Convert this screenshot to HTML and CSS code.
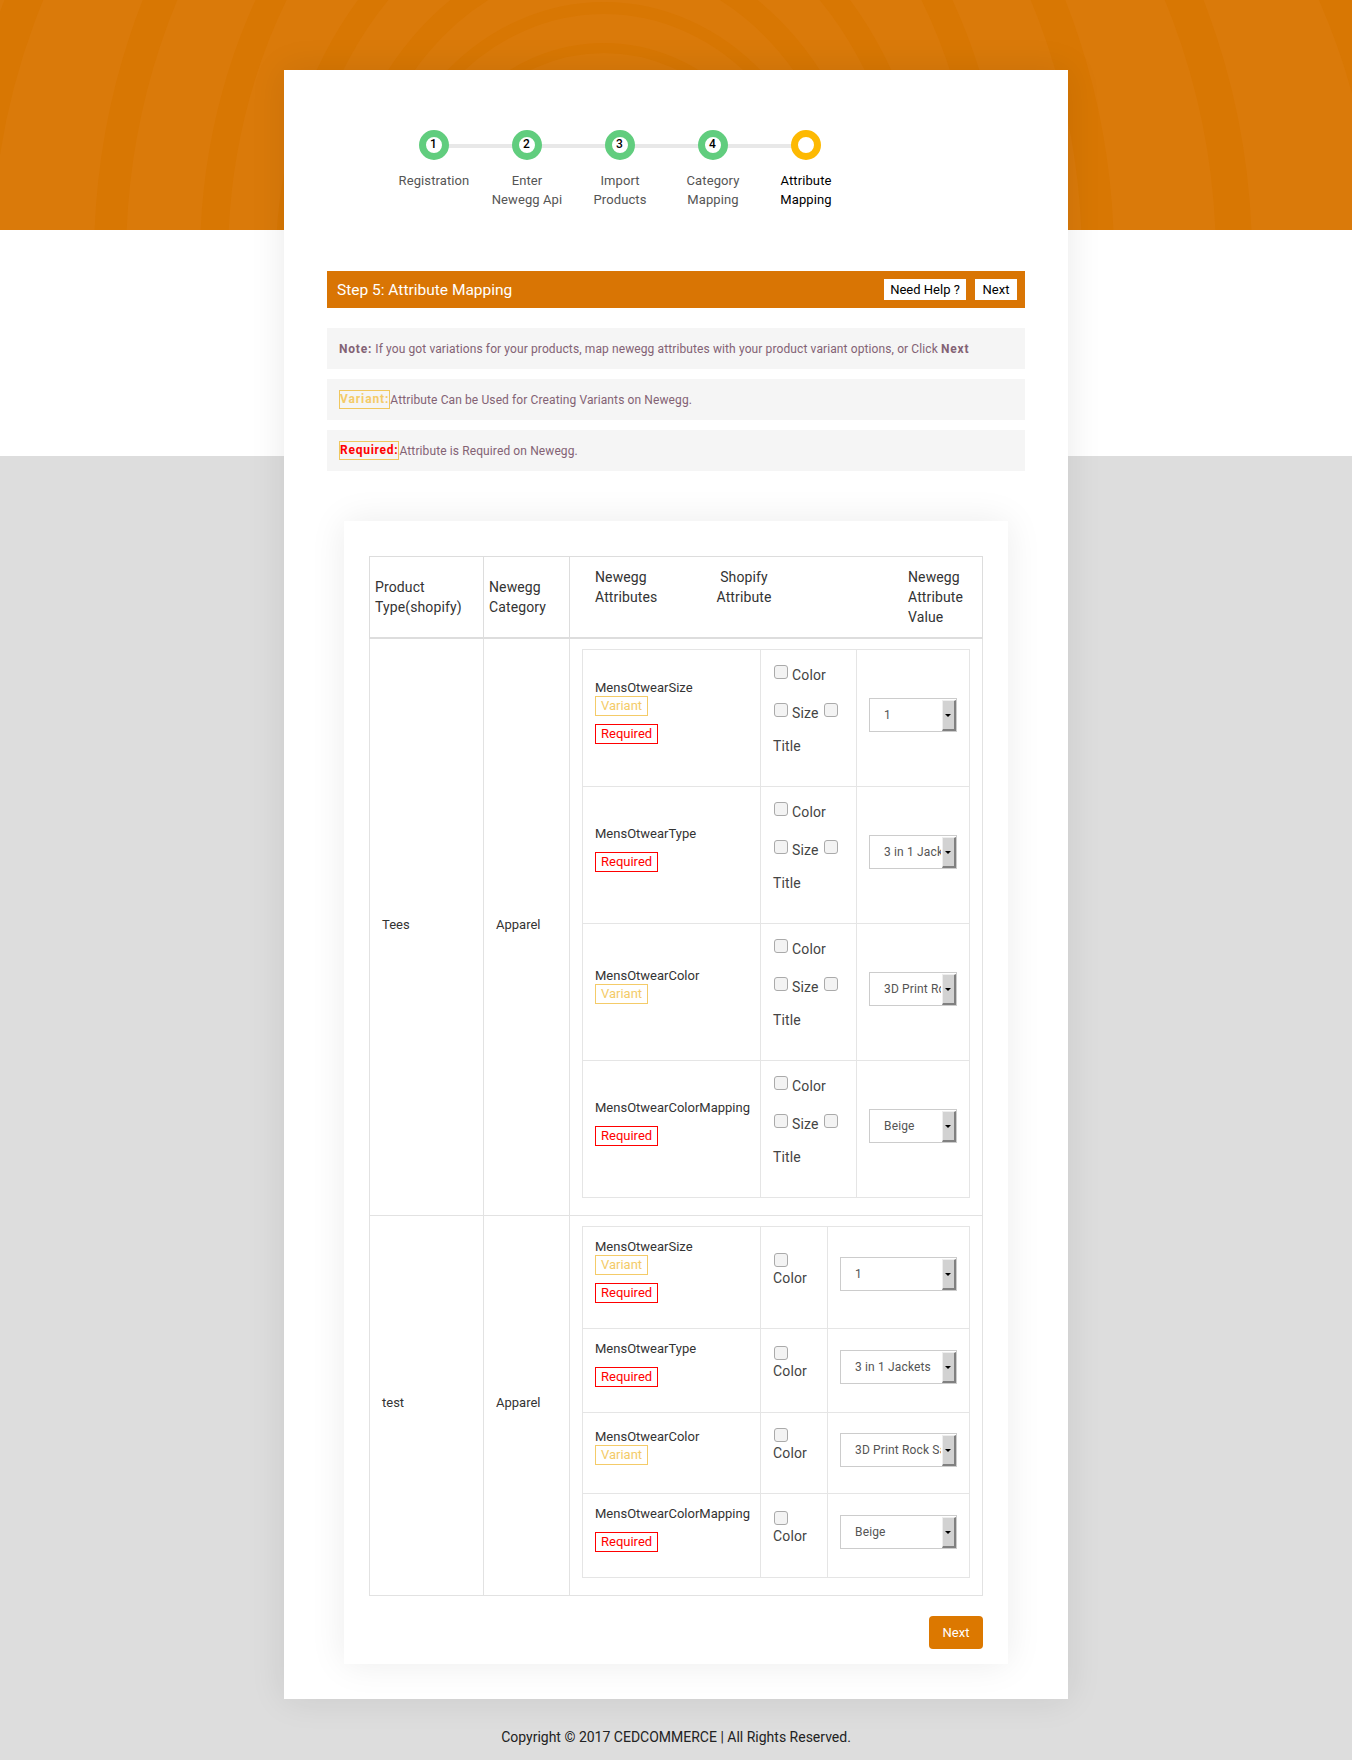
FILE: index.html
```html
<!DOCTYPE html>
<html lang="en">
<head>
<meta charset="utf-8">
<title>Step 5: Attribute Mapping</title>
<link rel="stylesheet" href="styles.css">
</head>
<body>
<div class="page">
  <svg class="rings" viewBox="0 0 1352 230" aria-hidden="true">
    <g fill="none" stroke="#d87703">
      <ellipse cx="604" cy="260" rx="190" ry="212" stroke-width="10"/>
      <ellipse cx="604" cy="260" rx="225" ry="252" stroke-width="12"/>
      <ellipse cx="604" cy="260" rx="259" ry="305" stroke-width="22"/>
      <ellipse cx="604" cy="260" rx="316" ry="381" stroke-width="24"/>
      <ellipse cx="604" cy="260" rx="390" ry="499" stroke-width="28"/>
      <ellipse cx="604" cy="260" rx="494" ry="593" stroke-width="32"/>
      <ellipse cx="604" cy="260" rx="630" ry="667" stroke-width="36"/>
      <ellipse cx="604" cy="260" rx="790" ry="720" stroke-width="40"/>
    </g>
  </svg>
  <main class="card">
    <ol class="steps">
      <li class="step done"><span class="dot">1</span><span class="step-label">Registration</span></li>
      <li class="step done"><span class="dot">2</span><span class="step-label">Enter<br>Newegg Api</span></li>
      <li class="step done"><span class="dot">3</span><span class="step-label">Import<br>Products</span></li>
      <li class="step done"><span class="dot">4</span><span class="step-label">Category<br>Mapping</span></li>
      <li class="step active"><span class="dot"></span><span class="step-label">Attribute<br>Mapping</span></li>
    </ol>

    <header class="bar">
      <h1 class="bar-title">Step 5: Attribute Mapping</h1>
      <a class="bar-btn bar-help" href="#">Need Help ?</a>
      <a class="bar-btn bar-next" href="#">Next</a>
    </header>

    <p class="note"><b>Note:</b> If you got variations for your products, map newegg attributes with your product variant options, or Click <b>Next</b></p>
    <p class="note"><span class="key key-variant">Variant:</span>Attribute Can be Used for Creating Variants on Newegg.</p>
    <p class="note"><span class="key key-required">Required:</span>Attribute is Required on Newegg.</p>

    <section class="panel">
      <table class="map">
        <colgroup><col class="c-type"><col class="c-cat"><col class="c-rest"></colgroup>
        <thead>
          <tr>
            <th>Product Type(shopify)</th>
            <th>Newegg Category</th>
            <th class="th-attrs">
              <div class="th-grid">
                <span>Newegg<br>Attributes</span>
                <span class="th-mid">Shopify<br>Attribute</span>
                <span class="th-val">Newegg<br>Attribute<br>Value</span>
              </div>
            </th>
          </tr>
        </thead>
        <tbody>
          <tr>
            <td class="cell-plain">Tees</td>
            <td class="cell-plain">Apparel</td>
            <td class="cell-inner">
              <table class="inner inner-wide">
                <colgroup><col class="i-name"><col class="i-opts"><col class="i-val"></colgroup>
                <tr>
                  <td><div class="attr">MensOtwearSize</div><span class="badge variant">Variant</span><span class="badge required">Required</span><div class="tail"></div></td>
                  <td>
                    <div class="opt-row"><input class="cb" type="checkbox"><label>Color</label></div>
                    <div class="opt-row"><input class="cb" type="checkbox"><label>Size</label><input class="cb" type="checkbox"></div>
                    <div class="opt-title">Title</div>
                  </td>
                  <td><div class="pick"><select class="sel"><option>1</option></select><span class="sel-btn"></span></div></td>
                </tr>
                <tr>
                  <td><div class="attr">MensOtwearType</div><span class="badge required only">Required</span><div class="tail"></div></td>
                  <td>
                    <div class="opt-row"><input class="cb" type="checkbox"><label>Color</label></div>
                    <div class="opt-row"><input class="cb" type="checkbox"><label>Size</label><input class="cb" type="checkbox"></div>
                    <div class="opt-title">Title</div>
                  </td>
                  <td><div class="pick"><select class="sel"><option>3 in 1 Jackets</option></select><span class="sel-btn"></span></div></td>
                </tr>
                <tr>
                  <td><div class="attr">MensOtwearColor</div><span class="badge variant">Variant</span><div class="tail"></div></td>
                  <td>
                    <div class="opt-row"><input class="cb" type="checkbox"><label>Color</label></div>
                    <div class="opt-row"><input class="cb" type="checkbox"><label>Size</label><input class="cb" type="checkbox"></div>
                    <div class="opt-title">Title</div>
                  </td>
                  <td><div class="pick"><select class="sel"><option>3D Print Rock Sample</option></select><span class="sel-btn"></span></div></td>
                </tr>
                <tr>
                  <td><div class="attr">MensOtwearColorMapping</div><span class="badge required only">Required</span><div class="tail"></div></td>
                  <td>
                    <div class="opt-row"><input class="cb" type="checkbox"><label>Color</label></div>
                    <div class="opt-row"><input class="cb" type="checkbox"><label>Size</label><input class="cb" type="checkbox"></div>
                    <div class="opt-title">Title</div>
                  </td>
                  <td><div class="pick"><select class="sel"><option>Beige</option></select><span class="sel-btn"></span></div></td>
                </tr>
              </table>
            </td>
          </tr>
          <tr>
            <td class="cell-plain">test</td>
            <td class="cell-plain">Apparel</td>
            <td class="cell-inner">
              <table class="inner inner-narrow">
                <colgroup><col class="i-name"><col class="i-opts"><col class="i-val"></colgroup>
                <tr>
                  <td><div class="attr">MensOtwearSize</div><span class="badge variant">Variant</span><span class="badge required">Required</span><div class="tail"></div></td>
                  <td><div class="opt-stack"><input class="cb" type="checkbox"><label>Color</label></div></td>
                  <td><div class="pick"><select class="sel"><option>1</option></select><span class="sel-btn"></span></div></td>
                </tr>
                <tr>
                  <td><div class="attr">MensOtwearType</div><span class="badge required only">Required</span><div class="tail"></div></td>
                  <td><div class="opt-stack"><input class="cb" type="checkbox"><label>Color</label></div></td>
                  <td><div class="pick"><select class="sel"><option>3 in 1 Jackets</option></select><span class="sel-btn"></span></div></td>
                </tr>
                <tr>
                  <td><div class="attr">MensOtwearColor</div><span class="badge variant">Variant</span><div class="tail"></div></td>
                  <td><div class="opt-stack"><input class="cb" type="checkbox"><label>Color</label></div></td>
                  <td><div class="pick"><select class="sel"><option>3D Print Rock Sample</option></select><span class="sel-btn"></span></div></td>
                </tr>
                <tr>
                  <td><div class="attr">MensOtwearColorMapping</div><span class="badge required only">Required</span><div class="tail"></div></td>
                  <td><div class="opt-stack"><input class="cb" type="checkbox"><label>Color</label></div></td>
                  <td><div class="pick"><select class="sel"><option>Beige</option></select><span class="sel-btn"></span></div></td>
                </tr>
              </table>
            </td>
          </tr>
        </tbody>
      </table>
      <div class="actions"><a class="next" href="#">Next</a></div>
    </section>
  </main>
  <footer class="copy">Copyright © 2017 CEDCOMMERCE | All Rights Reserved.</footer>
</div>
</body>
</html>
```

FILE: styles.css
```css
* { box-sizing: border-box; }
html, body { margin: 0; padding: 0; background: #fff; }
body { font-family: Roboto, "Liberation Sans", sans-serif; color: #333; }

.page {
  position: relative;
  width: 1352px;
  height: 1760px;
  padding-top: 70px;
  background: linear-gradient(#da7a0a 0, #da7a0a 230px, #fff 230px, #fff 456px, #ddd 456px);
}
.rings { position: absolute; left: 0; top: 0; width: 1352px; height: 230px; }

.card {
  position: relative;
  width: 784px;
  height: 1629px;
  margin: 0 auto;
  padding: 60px 43px 0;
  background: #fff;
  box-shadow: 0 0 34px rgba(0, 0, 0, .09);
}

/* stepper */
.steps { display: flex; list-style: none; margin: 0 0 0 60px; padding: 0; height: 80px; }
.step { position: relative; width: 93px; text-align: center; font-size: 13px; line-height: 19px; letter-spacing: .1px; color: #555; }
.step + .step::before {
  content: ""; position: absolute; left: -47px; top: 14px; width: 93px; height: 4px; background: #e8e8e8;
}
.dot {
  position: relative; z-index: 1; display: block; width: 30px; height: 30px; margin: 0 auto 11px;
  border: 7px solid #61cd7e; border-radius: 50%; background: #fff;
  font-size: 12px; font-weight: 500; line-height: 15px; color: #000; text-align: center;
}
.step-label { display: block; padding-left: 1px; }
.active { color: #000; }
.active .dot { border-color: #fdb902; }

/* title bar */
.bar {
  display: flex; align-items: center; gap: 9px; height: 37px; margin-top: 61px; padding: 0 8px 0 10px;
  background: #d97504;
}
.bar-title { flex: 1; margin: 0; font-size: 15.5px; font-weight: 400; color: #fff; }
.bar-btn {
  display: block; height: 21px; background: #fff; color: #000;
  font-size: 13px; line-height: 21px; text-align: center; text-decoration: none;
}
.bar-help { width: 82px; }
.bar-next { width: 42px; }

/* notes */
.note {
  display: flex; align-items: center; height: 41px; margin: 10px 0 0; padding: 0 12px; background: #f5f5f5;
  font-size: 12px; letter-spacing: .11px; color: #836274; white-space: pre-wrap;
}
.bar + .note { margin-top: 20px; }
.note b { font-weight: 700; letter-spacing: .8px; }
.key { display: block; height: 19px; border: 1px solid #f0c75e; line-height: 17px; font-weight: 700; letter-spacing: .9px; }
.key-variant { color: #f4cb68; }
.key-required { color: #f00; letter-spacing: .75px; }

/* panel */
.panel {
  width: 664px; height: 1143px; margin: 50px 0 0 17px; padding: 35px 25px 0 25px;
  background: #fff; box-shadow: 0 0 34px rgba(0, 0, 0, .08);
}
.map { width: 614px; border-collapse: collapse; table-layout: fixed; font-size: 13px; }
.c-type { width: 114px; }
.c-cat { width: 86px; }
.map > thead > tr > th,
.map > tbody > tr > td { border: 1px solid #e2e2e2; }
.map > thead > tr > th {
  padding: 10px 5px; border-color: #ddd; border-bottom: 2px solid #ddd;
  font-size: 14px; font-weight: 400; line-height: 20px; letter-spacing: .12px; text-align: left; vertical-align: middle;
}
.map > thead > tr > th.th-attrs { padding: 10px 0 10px 25px; }
.th-grid { display: grid; grid-template-columns: 113px 72px 1fr; }
.th-mid { text-align: center; }
.th-val { margin-left: 128px; }
.map > tbody > tr > td.cell-plain { padding: 0 12px 6px; vertical-align: middle; }
.map > tbody > tr > td.cell-inner { padding: 10px 13px 17px 12px; vertical-align: top; }

/* inner tables */
.inner { width: 388px; border-collapse: collapse; table-layout: fixed; font-size: 13px; }
.inner td { padding: 12px; border: 1px solid #e5e5e5; vertical-align: middle; }
.i-name { width: 178px; }
.inner-wide .i-opts { width: 96px; }
.inner-narrow .i-opts { width: 67px; }
.attr { line-height: 16px; white-space: nowrap; }
.badge { display: block; width: max-content; height: 20px; padding: 0 5px; border: 1px solid; line-height: 18px; }
.variant { border-color: #f4cb68; color: #f4cb68; }
.required { margin-top: 8px; border-color: #f00; color: #f00; }
.required.only { margin-top: 10px; }
.tail { height: 13px; }

.cb {
  appearance: none; display: block; flex: none; width: 14px; height: 14px; margin: 3px 4px 0 1px;
  border: 1px solid #aaa; border-radius: 3px; background: #f3f3f3;
}
.inner label { font-size: 14px; line-height: 20px; letter-spacing: .15px; color: #444; }
.opt-row { display: flex; align-items: flex-start; height: 38px; }
.opt-row label { margin: 3px 4px 0 0; }
.opt-row + .opt-row { height: 36px; }
.opt-title { height: 38px; font-size: 14px; line-height: 20px; letter-spacing: .15px; color: #444; }
.opt-stack { height: 56px; padding-top: 3px; }
.opt-stack .cb { margin-top: 0; }
.opt-stack label { display: block; margin-top: 1px; }

.pick { position: relative; height: 34px; margin-bottom: 7px; }
.sel {
  appearance: none; display: block; width: 100%; height: 34px; padding: 0 15px 0 14px;
  border: 1px solid #ccc; border-radius: 0; background: #fff;
  font-family: inherit; font-size: 12px; letter-spacing: .15px; color: #555;
}
.sel-btn {
  position: absolute; top: 2px; right: 1px; bottom: 1px; width: 14px;
  border-right: 2px solid #808080; border-bottom: 2px solid #808080; border-top: 1px solid #eee; border-left: 1px solid #eee;
  background: #d2d2d2;
}
.sel-btn::after {
  content: ""; position: absolute; left: 2px; top: 13px;
  border: 3px solid transparent; border-top: 3px solid #000; border-bottom: 0;
}

.actions { display: flex; justify-content: flex-end; margin-top: 20px; }
.next {
  display: block; width: 54px; height: 33px; border-radius: 4px; background: #dc7800; color: #fff;
  font-size: 13px; line-height: 33px; text-align: center; text-decoration: none;
}

.copy { margin-top: 28px; font-size: 14px; line-height: 20px; color: #222; text-align: center; }
```
